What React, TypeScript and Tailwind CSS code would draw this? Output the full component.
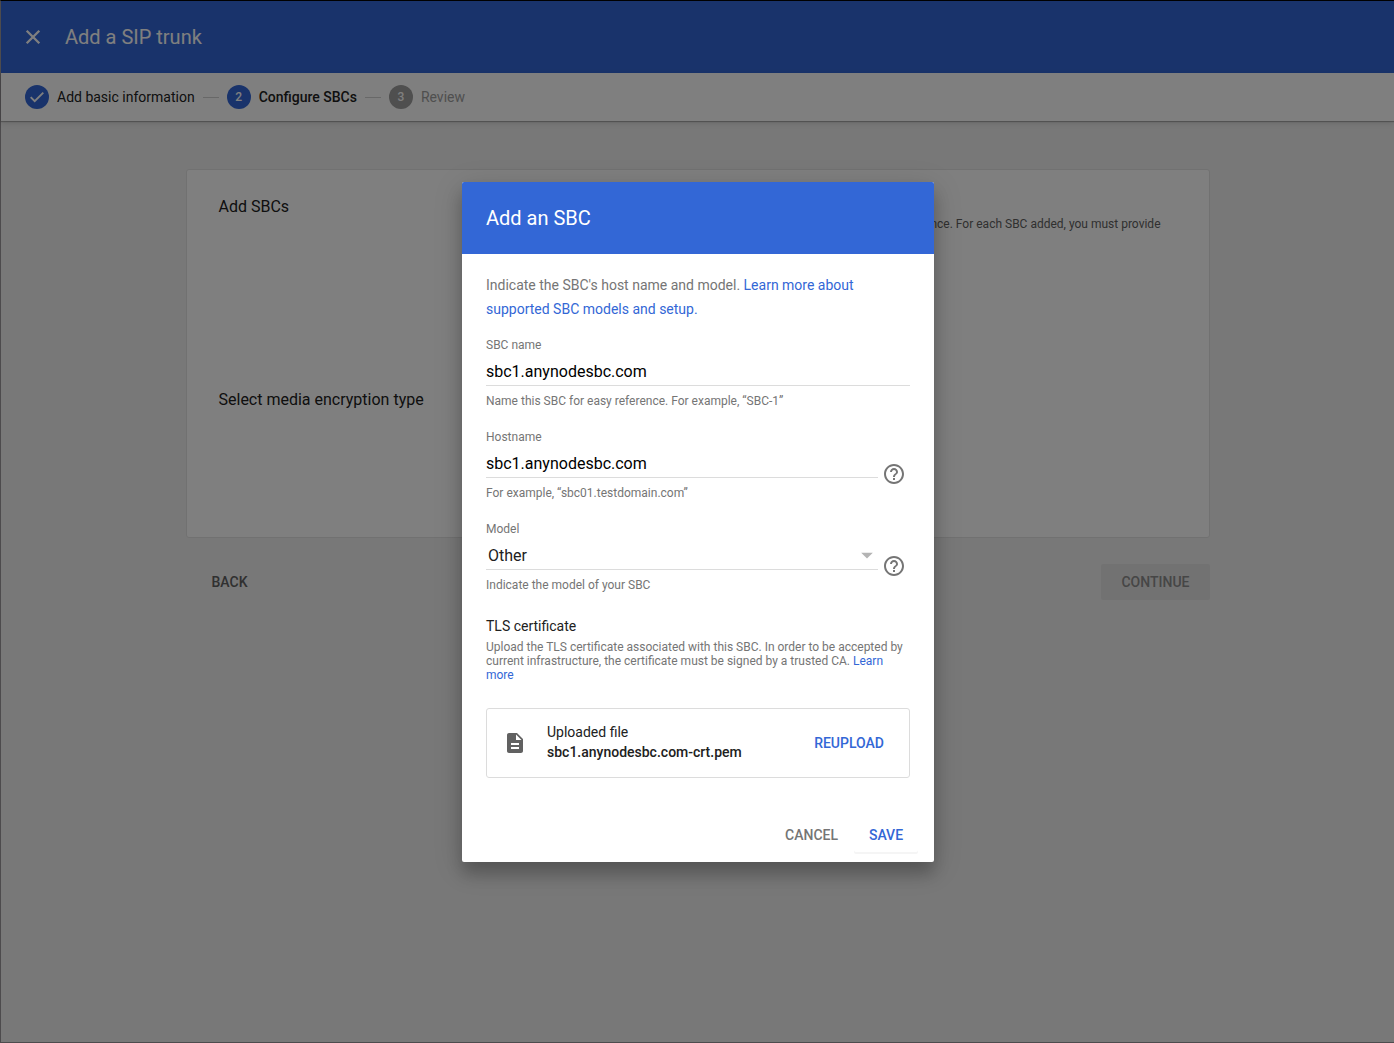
import type { ReactNode } from "react";
import { MdArrowDropDown, MdDescription, MdHelpOutline } from "react-icons/md";

const steps = [
  { id: 1, label: "Add basic information", state: "done" },
  { id: 2, label: "Configure SBCs", state: "current" },
  { id: 3, label: "Review", state: "upcoming" },
];

function CloseIcon() {
  return (
    <svg viewBox="0 0 24 24" className="size-6" fill="none" stroke="currentColor" strokeWidth={2.3} aria-hidden="true">
      <path d="M5.7 5.7L18.3 18.3M18.3 5.7L5.7 18.3" />
    </svg>
  );
}

function CheckIcon() {
  return (
    <svg viewBox="0 0 18 18" className="size-[18px]" fill="none" stroke="currentColor" strokeWidth={1.9} aria-hidden="true">
      <path d="M2.7 9.2L6.7 13.2L15.3 4.6" />
    </svg>
  );
}

function Stepper() {
  return (
    <ol className="relative flex h-12 items-center bg-white px-6 text-sm text-[#212121] shadow-[0_1px_1px_rgba(0,0,0,0.25),0_2px_6px_rgba(0,0,0,0.12)]">
      {steps.map((step, i) => (
        <li
          key={step.id}
          aria-current={step.state === "current" ? "step" : undefined}
          className="flex items-center"
        >
          {i > 0 && <span className="mx-2 h-px w-4 bg-[#d0d0d0]" />}
          <span
            className={`mr-2 flex size-6 items-center justify-center rounded-full text-xs font-medium text-white ${
              step.state === "upcoming" ? "bg-[#9e9e9e]" : "bg-[#3367d6]"
            }`}
          >
            {step.state === "done" ? <CheckIcon /> : step.id}
          </span>
          <span
            className={
              step.state === "current"
                ? "font-medium"
                : step.state === "upcoming"
                  ? "text-[#9e9e9e]"
                  : ""
            }
          >
            {step.label}
          </span>
        </li>
      ))}
    </ol>
  );
}

function Field({
  id,
  label,
  hint,
  help,
  children,
}: {
  id: string;
  label: string;
  hint: string;
  help?: boolean;
  children: ReactNode;
}) {
  return (
    <div className="flex items-start gap-1 text-xs text-[#757575]">
      <div className="min-w-0 flex-1">
        <label htmlFor={id} className="block">
          {label}
        </label>
        {children}
        <p id={`${id}-hint`} className="mt-[7px]">
          {hint}
        </p>
      </div>
      {help && (
        <button type="button" aria-label={`Help for ${label}`} className="mt-[33px] mr-1">
          <MdHelpOutline className="size-6" />
        </button>
      )}
    </div>
  );
}

const control =
  "mt-1 block h-[29px] w-full appearance-none rounded-none border-b border-[#dcdcdc] bg-transparent pt-0.5 text-base outline-none";

function SbcDialog() {
  return (
    <form
      role="dialog"
      aria-modal="true"
      aria-labelledby="dialog-title"
      onSubmit={(e) => e.preventDefault()}
      className="w-full max-w-[472px] overflow-hidden rounded-xs bg-white shadow-[0_12px_16px_rgba(0,0,0,0.2),0_6px_30px_rgba(0,0,0,0.16)]"
    >
      <h2 id="dialog-title" className="bg-[#3367d6] px-6 py-[22px] text-xl text-white">
        Add an SBC
      </h2>
      <div className="px-6 pt-[19px]">
        <p className="text-sm leading-6 text-[#757575]">
          Indicate the SBC's host name and model.{" "}
          <a href="#models" className="text-[#3367d6]">
            Learn more about supported SBC models and setup.
          </a>
        </p>
        <div className="mt-4 flex flex-col gap-5">
          <Field id="sbc-name" label="SBC name" hint="Name this SBC for easy reference. For example, “SBC-1”">
            <input
              id="sbc-name"
              aria-describedby="sbc-name-hint"
              defaultValue="sbc1.anynodesbc.com"
              className={`${control} text-black`}
            />
          </Field>
          <Field id="hostname" label="Hostname" hint="For example, “sbc01.testdomain.com”" help>
            <input
              id="hostname"
              aria-describedby="hostname-hint"
              defaultValue="sbc1.anynodesbc.com"
              className={`${control} text-black`}
            />
          </Field>
          <Field id="model" label="Model" hint="Indicate the model of your SBC" help>
            <div className="relative">
              <select
                id="model"
                aria-describedby="model-hint"
                defaultValue="Other"
                className={`${control} pl-0.5 text-[#212121]`}
              >
                <option>Other</option>
              </select>
              <MdArrowDropDown className="pointer-events-none absolute -right-[3px] bottom-px size-7 text-[#b4b4b4]" />
            </div>
          </Field>
        </div>
        <h3 className="mt-[23px] text-sm text-[#212121]">TLS certificate</h3>
        <p className="mt-1 text-xs leading-[14px] text-[#757575]">
          Upload the TLS certificate associated with this SBC. In order to be accepted by current
          infrastructure, the certificate must be signed by a trusted CA.{" "}
          <a href="#certificates" className="text-[#3367d6]">
            Learn more
          </a>
        </p>
        <div className="mt-[26px] flex h-[70px] items-center rounded-[3px] border border-[#dcdcdc] px-4 text-sm text-[#212121]">
          <MdDescription className="size-6 text-[#616161]" />
          <div className="ml-5 flex-1 pb-0.5">
            <p>Uploaded file</p>
            <p className="font-medium">sbc1.anynodesbc.com-crt.pem</p>
          </div>
          <button type="button" className="h-9 px-[9px] font-medium text-[#3367d6]">
            REUPLOAD
          </button>
        </div>
      </div>
      <div className="mt-[38px] flex justify-end px-4 pb-2.5 text-sm font-medium">
        <button type="button" className="h-9 px-4 pt-0.5 text-[#757575]">
          CANCEL
        </button>
        <button
          type="submit"
          className="h-9 min-w-16 rounded-xs pt-0.5 text-[#3367d6] shadow-[0_2px_0_#f5f5f5]"
        >
          SAVE
        </button>
      </div>
    </form>
  );
}

export default function App() {
  return (
    <div className="relative flex min-h-screen flex-col border border-r-0 border-[#4d4b4d] border-t-black bg-[#f0f0f0] font-[Roboto,sans-serif]">
      <header className="flex h-[72px] items-center gap-5 bg-[#3367d6] px-5 text-white">
        <button type="button" aria-label="Close">
          <CloseIcon />
        </button>
        <h1 className="text-xl">Add a SIP trunk</h1>
      </header>
      <Stepper />
      <main className="mx-auto mt-12 w-full max-w-[1024px]">
        <section className="rounded-[3px] border border-[#e2e2e2] bg-white px-8 text-[#212121]">
          <div className="flex h-[193px] justify-between pt-[25px]">
            <h2>Add SBCs</h2>
            <p className="mt-[21px] mr-4 text-xs text-[#616161]">
              Add SBCs for resilience. For each SBC added, you must provide
            </p>
          </div>
          <div className="h-[174px] pt-[25px]">
            <h2>Select media encryption type</h2>
          </div>
        </section>
        <div className="mt-[26px] flex justify-between text-sm font-medium">
          <button type="button" className="h-9 px-[26px] text-[#616161]">
            BACK
          </button>
          <button
            type="button"
            disabled
            className="h-9 rounded-xs bg-[#e4e4e4] px-5 text-[#8c8c8c]"
          >
            CONTINUE
          </button>
        </div>
      </main>
      <div className="absolute inset-0 flex items-center justify-center bg-black/50 pl-px">
        <SbcDialog />
      </div>
    </div>
  );
}
